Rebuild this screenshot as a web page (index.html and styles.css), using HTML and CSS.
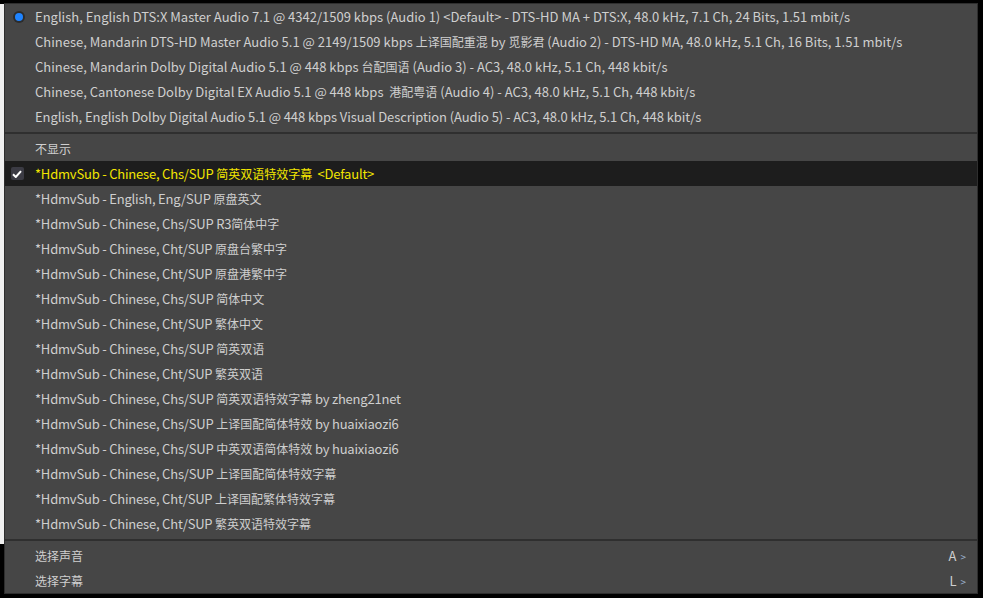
FILE: index.html
```html
<!DOCTYPE html>
<html>
<head>
<meta charset="utf-8">
<link rel="stylesheet" href="styles.css">
</head>
<body>
<div class="backdrop">
  <div class="left-strip"></div>
  <div class="menu">
    <div class="item"><span class="mark"><span class="radio"></span></span><span class="label">English, English DTS:X Master Audio 7.1 @ 4342/1509 kbps (Audio 1) &lt;Default&gt; - DTS-HD MA + DTS:X, 48.0 kHz, 7.1 Ch, 24 Bits, 1.51 mbit/s</span></div>
    <div class="item"><span class="mark"></span><span class="label">Chinese, Mandarin DTS-HD Master Audio 5.1 @ 2149/1509 kbps <span class="cjk">上译国配重混</span> by <span class="cjk">觅影君</span> (Audio 2) - DTS-HD MA, 48.0 kHz, 5.1 Ch, 16 Bits, 1.51 mbit/s</span></div>
    <div class="item"><span class="mark"></span><span class="label">Chinese, Mandarin Dolby Digital Audio 5.1 @ 448 kbps <span class="cjk">台配国语</span> (Audio 3) - AC3, 48.0 kHz, 5.1 Ch, 448 kbit/s</span></div>
    <div class="item"><span class="mark"></span><span class="label">Chinese, Cantonese Dolby Digital EX Audio 5.1 @ 448 kbps &nbsp;<span class="cjk">港配粤语</span> (Audio 4) - AC3, 48.0 kHz, 5.1 Ch, 448 kbit/s</span></div>
    <div class="item"><span class="mark"></span><span class="label tight">English, English Dolby Digital Audio 5.1 @ 448 kbps Visual Description (Audio 5) - AC3, 48.0 kHz, 5.1 Ch, 448 kbit/s</span></div>
    <div class="sep"></div>
    <div class="item"><span class="mark"></span><span class="label cjk">不显示</span></div>
    <div class="item active"><span class="mark"><span class="check"><svg width="10" height="8" viewBox="0 0 10 8"><path d="M1 4.2 L3.8 7 L9 1.2" fill="none" stroke="#fff" stroke-width="2"/></svg></span></span><span class="label sub">*HdmvSub - Chinese, Chs/SUP <span class="cjk">简英双语特效字幕</span>&nbsp; &lt;Default&gt;</span></div>
    <div class="item"><span class="mark"></span><span class="label sub">*HdmvSub - English, Eng/SUP <span class="cjk">原盘英文</span></span></div>
    <div class="item"><span class="mark"></span><span class="label sub">*HdmvSub - Chinese, Chs/SUP R3<span class="cjk">简体中字</span></span></div>
    <div class="item"><span class="mark"></span><span class="label sub">*HdmvSub - Chinese, Cht/SUP <span class="cjk">原盘台繁中字</span></span></div>
    <div class="item"><span class="mark"></span><span class="label sub">*HdmvSub - Chinese, Cht/SUP <span class="cjk">原盘港繁中字</span></span></div>
    <div class="item"><span class="mark"></span><span class="label sub">*HdmvSub - Chinese, Chs/SUP <span class="cjk">简体中文</span></span></div>
    <div class="item"><span class="mark"></span><span class="label sub">*HdmvSub - Chinese, Cht/SUP <span class="cjk">繁体中文</span></span></div>
    <div class="item"><span class="mark"></span><span class="label sub">*HdmvSub - Chinese, Chs/SUP <span class="cjk">简英双语</span></span></div>
    <div class="item"><span class="mark"></span><span class="label sub">*HdmvSub - Chinese, Cht/SUP <span class="cjk">繁英双语</span></span></div>
    <div class="item"><span class="mark"></span><span class="label sub">*HdmvSub - Chinese, Chs/SUP <span class="cjk">简英双语特效字幕</span> by zheng21net</span></div>
    <div class="item"><span class="mark"></span><span class="label sub">*HdmvSub - Chinese, Chs/SUP <span class="cjk">上译国配简体特效</span> by huaixiaozi6</span></div>
    <div class="item"><span class="mark"></span><span class="label sub">*HdmvSub - Chinese, Chs/SUP <span class="cjk">中英双语简体特效</span> by huaixiaozi6</span></div>
    <div class="item"><span class="mark"></span><span class="label sub">*HdmvSub - Chinese, Chs/SUP <span class="cjk">上译国配简体特效字幕</span></span></div>
    <div class="item"><span class="mark"></span><span class="label sub">*HdmvSub - Chinese, Cht/SUP <span class="cjk">上译国配繁体特效字幕</span></span></div>
    <div class="item"><span class="mark"></span><span class="label sub">*HdmvSub - Chinese, Cht/SUP <span class="cjk">繁英双语特效字幕</span></span></div>
    <div class="sep"></div>
    <div class="item"><span class="mark"></span><span class="label cjk">选择声音</span><span class="key">A<span class="arrow">&gt;</span></span></div>
    <div class="item"><span class="mark"></span><span class="label cjk">选择字幕</span><span class="key">L<span class="arrow">&gt;</span></span></div>
  </div>
</div>
</body>
</html>
```
FILE: styles.css
```css
html, body {
  margin: 0;
  padding: 0;
  background: #000;
  width: 983px;
  height: 598px;
  overflow: hidden;
}
.backdrop {
  position: relative;
  width: 983px;
  height: 598px;
  background: #000;
}
.left-strip {
  position: absolute;
  left: 0;
  top: 4px;
  width: 4px;
  height: 540px;
  background: #f0f0f0;
}
.menu {
  position: absolute;
  left: 4px;
  top: 3px;
  width: 972px;
  background: #464646;
  border: 1px solid #2e2e2e;
  display: flex;
  flex-direction: column;
  font-family: "Noto Sans CJK SC", "Noto Sans", sans-serif;
  font-size: 13px;
  color: #cfcfcf;
}
.item {
  flex: none;
  height: 25px;
  box-sizing: border-box;
  padding-top: 1px;
  padding-bottom: 2px;
  display: flex;
  align-items: center;
  white-space: nowrap;
}
.item.active {
  background: #1d1d1d;
  color: #f2e600;
}
.mark {
  width: 30px;
  flex: none;
  display: flex;
  align-items: center;
  justify-content: center;
  padding-top: 1px;
}
.label {
  flex: 1;
}
.tight {
  letter-spacing: -0.08px;
}
.sub {
  letter-spacing: -0.2px;
}
.cjk {
  font-size: 12px;
  letter-spacing: 0;
}
.radio {
  width: 8px;
  height: 8px;
  border-radius: 50%;
  background: #1f84ff;
  box-shadow: 0 0 0 2px #2c2c2c;
  margin-left: -3px;
}
.check {
  width: 13px;
  height: 13px;
  border-radius: 2px;
  background: #3b3b44;
  display: flex;
  align-items: center;
  justify-content: center;
  margin-left: -6px;
}
.sep {
  flex: none;
  height: 7px;
  display: flex;
  align-items: center;
}
.sep::before {
  content: "";
  flex: 1;
  height: 2px;
  background: #2f2f2f;
}
.key {
  padding-right: 11px;
  color: #cfcfcf;
}
.arrow {
  color: #9cb4d0;
  font-size: 10px;
  margin-left: 4px;
}
```
